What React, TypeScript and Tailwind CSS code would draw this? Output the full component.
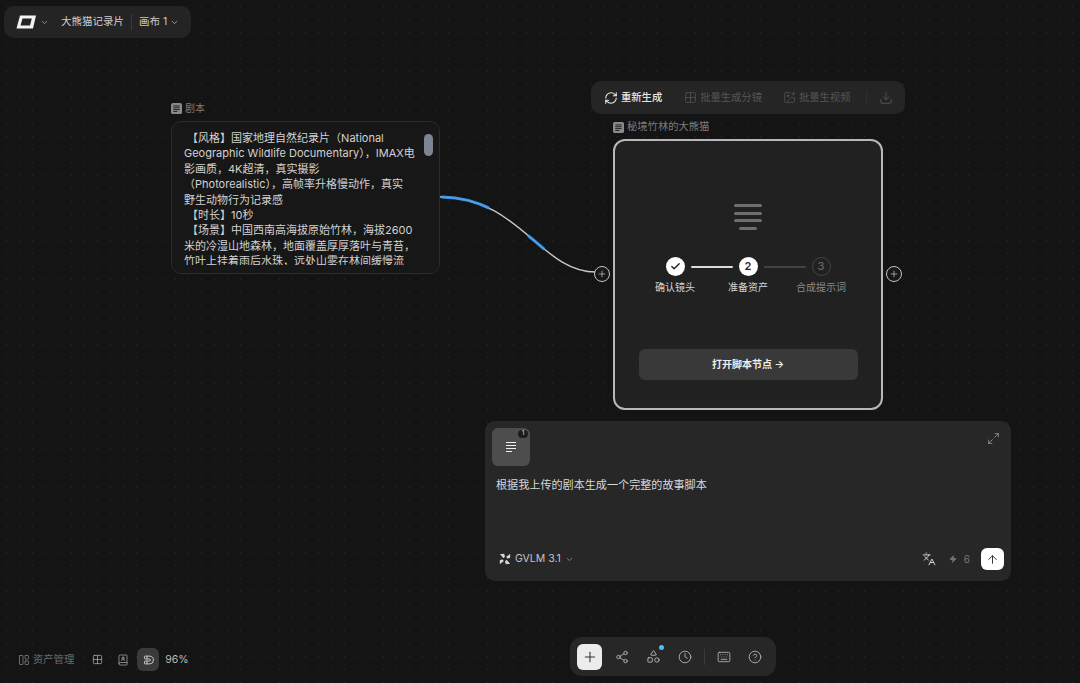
import React from 'react';
import {
  ArrowUp,
  BookUser,
  Check,
  ChevronDown,
  CircleHelp,
  Clock,
  Download,
  Grid2x2,
  ImagePlus,
  Keyboard,
  Languages,
  LayoutPanelLeft,
  Magnet,
  Maximize2,
  Plus,
  RefreshCw,
  Share2,
  Shapes,
  Zap,
} from 'lucide-react';

const scriptLines = [
  '\u3000【风格】国家地理自然纪录片（National',
  'Geographic Wildlife Documentary），IMAX电',
  '影画质，4K超清，真实摄影',
  '（Photorealistic），高帧率升格慢动作，真实',
  '野生动物行为记录感',
  '\u3000【时长】10秒',
  '\u3000【场景】中国西南高海拔原始竹林，海拔2600',
  '米的冷湿山地森林，地面覆盖厚厚落叶与青苔，',
  '竹叶上挂着雨后水珠，远处山雾在林间缓慢流',
];

const curve = 'M440 197 C520 197 540 272 596 272';

function DocIcon({ className }: { className?: string }) {
  return (
    <svg viewBox="0 0 12 12" className={className}>
      <rect width="12" height="12" rx="2" fill="#8a8a8a" />
      <path d="M2.5 3.2h7M2.5 5.2h7M2.5 7.2h7M2.5 9.2h4.5" stroke="#1a1a1a" strokeWidth="1" />
    </svg>
  );
}

function Logo() {
  return (
    <svg viewBox="0 0 22 14" className="h-[14px] w-[22px]">
      <path fillRule="evenodd" fill="#f4f4f4" d="M5 0.5H21L18 13.5H1.5ZM7.5 3.5 5.5 10.5H15L16.8 3.5Z" />
    </svg>
  );
}

function ModelLogo() {
  return (
    <svg viewBox="0 0 14 14" className="h-3 w-3" fill="#d8d8d8">
      <path d="M1 1.5 6 1 7 4.5 5 6.2 3.5 4.2ZM13 1 13 5.8 9.6 6.4 8.4 4.4 10.6 3ZM13 12.5 8 13 7 9.6 9 7.8 10.6 9.8ZM1 13 1 8.2 4.4 7.6 5.6 9.6 3.4 11Z" />
    </svg>
  );
}

function PlusPort() {
  return (
    <div className="flex h-4 w-4 items-center justify-center rounded-full border border-[#c4c4c4] bg-[#171717] text-[#d4d4d4]">
      <Plus size={10} strokeWidth={1.6} />
    </div>
  );
}

function Step({ label, state, n }: { label: string; state: 'done' | 'active' | 'todo'; n: number }) {
  return (
    <div className="flex w-[73px] flex-col items-center">
      {state === 'done' && (
        <div className="flex h-[19px] w-[19px] items-center justify-center rounded-full bg-white text-[#222]">
          <Check size={11} strokeWidth={3} />
        </div>
      )}
      {state === 'active' && (
        <div className="flex h-[19px] w-[19px] items-center justify-center rounded-full bg-white text-[11px] font-semibold text-[#222]">
          {n}
        </div>
      )}
      {state === 'todo' && (
        <div className="flex h-[19px] w-[19px] items-center justify-center rounded-full border border-[#444] text-[11px] font-medium text-[#666]">
          {n}
        </div>
      )}
      <span className={`mt-[4px] whitespace-nowrap text-[10px] leading-[14px] ${state === 'todo' ? 'text-[#8a8a8a]' : 'text-[#d6d6d6]'}`}>
        {label}
      </span>
    </div>
  );
}

export default function App() {
  return (
    <div className="relative h-[683px] w-[1080px] overflow-hidden bg-[#141414] bg-[radial-gradient(circle,#2c2c2c_0.7px,transparent_0.8px)] bg-[size:13px_13px] font-['Inter','Noto_Sans_CJK_SC',sans-serif] text-white">
      {/* top left project bar */}
      <div className="absolute left-[4px] top-[6px] flex h-[32px] w-[187px] items-center rounded-[10px] bg-[#242424] pl-[11px]">
        <Logo />
        <ChevronDown size={9} className="ml-[3px] text-[#aaa]" />
        <span className="ml-[12px] text-[10.5px] text-[#d0d0d0]">大熊猫记录片</span>
        <div className="mx-[7px] h-[16px] w-px bg-[#3a3a3a]" />
        <span className="text-[10.5px] text-[#c8c8c8]">画布 1</span>
        <ChevronDown size={9} className="ml-[3px] text-[#bbb]" />
      </div>

      {/* connector */}
      <svg className="absolute inset-0 h-[683px] w-[1080px]" viewBox="0 0 1080 683" fill="none">
        <path d={curve} stroke="#c9c9c9" strokeWidth="1.4" />
        <path d={curve} pathLength={100} stroke="#3f9cf0" strokeWidth="3" strokeLinecap="round" strokeDasharray="11 28 11 34 15 1" strokeDashoffset="-17" opacity="0.9" />
      </svg>

      {/* script node */}
      <div className="absolute left-[171px] top-[101px] flex w-[269px] flex-col">
        <div className="flex h-[14px] items-center gap-[3px]">
          <DocIcon className="h-[11px] w-[11px]" />
          <span className="text-[10px] text-[#7c7c7c]">剧本</span>
        </div>
        <div className="relative mt-[6px] h-[153px] overflow-hidden rounded-[10px] border border-[#2c2c2c] bg-[#171717] pl-[12px] pt-[9px]">
          {scriptLines.map(line => (
            <div key={line} className="h-[15.4px] whitespace-pre text-[11px] leading-[15.4px] text-[#d2d2d2]">
              {line.replace('\u3000', ' ')}
            </div>
          ))}
          <div className="absolute bottom-0 left-0 right-0 h-[8px] bg-[#171717]" />
          <div className="absolute right-[6px] top-[12px] h-[22px] w-[9px] rounded-full bg-[#7d8594]" />
        </div>
      </div>

      {/* node toolbar */}
      <div className="absolute left-[591px] top-[81px] flex h-[33px] w-[314px] items-center rounded-[10px] bg-[#252525] pl-[13px] text-[10.3px]">
        <RefreshCw size={14} strokeWidth={1.8} className="text-[#eee]" />
        <span className="ml-[3px] font-medium text-[#e6e6e6]">重新生成</span>
        <Grid2x2 size={13} strokeWidth={1.4} className="ml-[22px] text-[#565656]" />
        <span className="ml-[3px] text-[#565656]">批量生成分镜</span>
        <ImagePlus size={13} strokeWidth={1.4} className="ml-[21px] text-[#565656]" />
        <span className="ml-[3px] text-[#565656]">批量生视频</span>
        <div className="ml-[16px] h-[14px] w-px bg-[#303030]" />
        <Download size={14} strokeWidth={1.4} className="ml-[12px] text-[#5c5c5c]" />
      </div>

      {/* story node */}
      <div className="absolute left-[613px] top-[120px] flex w-[270px] flex-col">
        <div className="flex h-[14px] items-center gap-[3px]">
          <DocIcon className="h-[11px] w-[11px]" />
          <span className="text-[10.3px] text-[#7c7c7c]">秘境竹林的大熊猫</span>
        </div>
        <div className="mt-[5px] flex h-[271px] flex-col items-center rounded-[12px] border-2 border-[#b8b8b8] bg-[#212121]">
          <div className="mt-[63px] flex flex-col items-center gap-[4.5px]">
            <div className="h-[3px] w-[28px] rounded-full bg-[#6e6e6e]" />
            <div className="h-[3px] w-[28px] rounded-full bg-[#6e6e6e]" />
            <div className="h-[3px] w-[28px] rounded-full bg-[#6e6e6e]" />
            <div className="h-[3px] w-[18px] rounded-full bg-[#6e6e6e]" />
          </div>
          <div className="relative mt-[27px] flex">
            <Step label="确认镜头" state="done" n={1} />
            <Step label="准备资产" state="active" n={2} />
            <Step label="合成提示词" state="todo" n={3} />
            <div className="absolute left-[52px] top-[9px] h-[2px] w-[42px] rounded-full bg-[#dcdcdc]" />
            <div className="absolute left-[125px] top-[9px] h-[2px] w-[42px] rounded-full bg-[#444]" />
          </div>
          <div className="mt-[55px] flex h-[31px] w-[219px] items-center justify-center rounded-[6px] bg-[#393939] text-[10px] font-semibold text-[#eee]">
            打开脚本节点 →
          </div>
        </div>
      </div>

      {/* ports */}
      <div className="absolute left-[594px] top-[266px]"><PlusPort /></div>
      <div className="absolute left-[886px] top-[266px]"><PlusPort /></div>

      {/* prompt panel */}
      <div className="absolute left-[485px] top-[421px] flex h-[160px] w-[526px] flex-col rounded-[10px] bg-[#272727] px-[7px] pt-[7px]">
        <div className="flex items-start justify-between">
          <div className="relative flex h-[38px] w-[38px] items-center justify-center rounded-[6px] bg-[#4d4d4d]">
            <svg viewBox="0 0 12 12" className="h-[12px] w-[12px]">
              <path d="M1 1.5h10M1 4.5h10M1 7.5h10M1 10.5h6" stroke="#f0f0f0" strokeWidth="1.2" />
            </svg>
            <div className="absolute right-[2px] top-[2px] flex h-[8px] w-[10px] items-center justify-center rounded-full bg-[#1c1c1c] text-[6.5px] text-[#ddd]">
              1
            </div>
          </div>
          <Maximize2 size={13} strokeWidth={1.5} className="mr-[4px] mt-[4px] text-[#999]" />
        </div>
        <p className="ml-[4px] mt-[11px] text-[11.1px] leading-[16px] text-[#d8d8d8]">根据我上传的剧本生成一个完整的故事脚本</p>
        <div className="mt-auto flex h-[33px] items-start justify-between">
          <div className="ml-[7px] flex h-[22px] items-center">
            <ModelLogo />
            <span className="ml-[4px] text-[10.5px] text-[#c4c4c4]">GVLM 3.1</span>
            <ChevronDown size={9} className="ml-[4px] text-[#999]" />
          </div>
          <div className="flex items-center">
            <Languages size={14} strokeWidth={1.6} className="text-[#ddd]" />
            <Zap size={8} className="ml-[13px] fill-[#777] text-[#777]" />
            <span className="ml-[7px] text-[10px] text-[#777]">6</span>
            <div className="ml-[11px] flex h-[22px] w-[23px] items-center justify-center rounded-[6px] bg-white text-[#333]">
              <ArrowUp size={13} strokeWidth={1.8} />
            </div>
          </div>
        </div>
      </div>

      {/* bottom left controls */}
      <div className="absolute left-[18px] top-[648px] flex h-[23px] items-center">
        <LayoutPanelLeft size={12} strokeWidth={1.4} className="text-[#8c8c8c]" />
        <span className="ml-[3px] text-[10.3px] text-[#6c6c6c]">资产管理</span>
        <Grid2x2 size={11} strokeWidth={1.6} className="ml-[18px] text-[#b0b0b0]" />
        <BookUser size={12} strokeWidth={1.4} className="ml-[14px] text-[#b0b0b0]" />
        <div className="ml-[8px] flex h-[23px] w-[22px] items-center justify-center rounded-[6px] bg-[#3a3a3a]">
          <Magnet size={12} strokeWidth={1.6} className="rotate-45 text-[#ddd]" />
        </div>
        <span className="ml-[6px] text-[10.5px] text-[#bcbcbc]">96%</span>
      </div>

      {/* bottom toolbar */}
      <div className="absolute left-[570px] top-[637px] flex h-[39px] w-[206px] items-center rounded-[12px] bg-[#272727] pl-[7px] text-[#bdbdbd]">
        <div className="flex h-[26px] w-[25px] items-center justify-center rounded-[6px] bg-[#ececec] text-[#333]">
          <Plus size={16} strokeWidth={1.6} />
        </div>
        <Share2 size={14} strokeWidth={1.4} className="ml-[13px]" />
        <div className="relative ml-[17px]">
          <Shapes size={15} strokeWidth={1.4} />
          <div className="absolute -right-[3px] -top-[4px] h-[5px] w-[5px] rounded-full bg-[#45c1ff]" />
        </div>
        <Clock size={14} strokeWidth={1.4} className="ml-[17px]" />
        <div className="ml-[12px] h-[16px] w-px bg-[#3a3a3a]" />
        <Keyboard size={14} strokeWidth={1.4} className="ml-[12px]" />
        <CircleHelp size={14} strokeWidth={1.4} className="ml-[17px]" />
      </div>
    </div>
  );
}
